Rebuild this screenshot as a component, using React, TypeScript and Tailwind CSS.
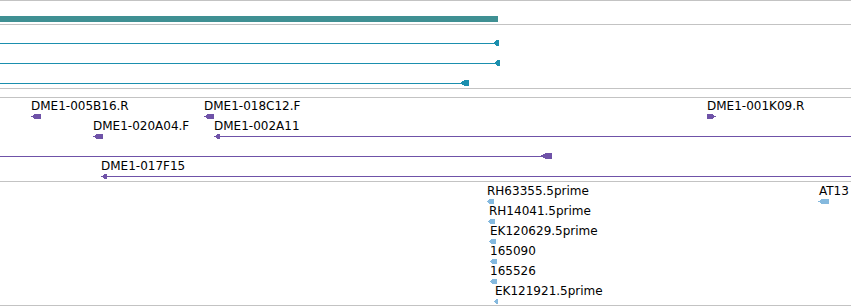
import React from "react";

type Dir = "l" | "r";

function Head({ w, h, dir, color, tip = 4 }: { w: number; h: number; dir: Dir; color: string; tip?: number }) {
  const pts =
    dir === "l"
      ? `0,${h / 2} ${tip},0 ${w},0 ${w},${h} ${tip},${h}`
      : `0,0 ${w - tip},0 ${w},${h / 2} ${w - tip},${h} 0,${h}`;
  return (
    <svg className="block shrink-0" width={w} height={h} viewBox={`0 0 ${w} ${h}`} shapeRendering="crispEdges">
      <polygon points={pts} fill={color} />
    </svg>
  );
}

function Feature({
  x,
  y,
  label,
  w,
  dir,
  color,
  tip,
  line,
  dx = 0,
}: {
  x: number;
  y: number;
  label: string;
  w: number;
  dir: Dir;
  color: string;
  tip?: number;
  line?: number;
  dx?: number;
}) {
  return (
    <div className="absolute flex flex-col items-start" style={{ left: x, top: y }}>
      <div className="whitespace-nowrap text-[12px] leading-[14px] text-black" style={{ marginLeft: dx }}>
        {label}
      </div>
      <div className="flex items-center h-[5px] mt-px">
        <Head w={w} h={5} dir={dir} color={color} tip={tip} />
        {line ? <div className="h-px -ml-px" style={{ width: line, background: color }} /> : null}
      </div>
    </div>
  );
}

/* A line feature ending with an arrow head, spanning from the left edge */
function Span({ y, w, head, color, tip, hh = 6 }: { y: number; w: number; head: number; color: string; tip: number; hh?: number }) {
  return (
    <div className="absolute left-0 flex items-center" style={{ top: y }}>
      <div className="h-px -mr-[2px]" style={{ width: w, background: color }} />
      <Head w={head} h={hh} dir="l" color={color} tip={tip} />
    </div>
  );
}

const TEAL = "#1b8fae";
const PURPLE = "#6f52a8";
const BLUE = "#85b9de";
const GRID = "border-[#c3c3c3]";

export default function App() {
  return (
    <div className="w-[851px] h-[306px] bg-white overflow-hidden font-['DejaVu_Sans',sans-serif] flex flex-col border-t border-[#c3c3c3]">
      {/* Track A: coverage bar */}
      <div className={`h-[24px] border-b ${GRID} pt-[15px]`}>
        <div className="h-[6px] w-[498px] bg-[#3f9093]" />
      </div>
      {/* Track B: transcripts */}
      <div className={`relative h-[64px] border-b ${GRID}`}>
        <Span y={15} w={495} head={6} color={TEAL} tip={4} />
        <Span y={35} w={496} head={6} color={TEAL} tip={4} />
        <Span y={55} w={462} head={9} color={TEAL} tip={5} />
      </div>
      {/* Empty track */}
      <div className={`h-[9px] border-b ${GRID}`} />
      {/* Track C: clones */}
      <div className={`relative h-[84px] border-b ${GRID}`}>
        <Feature x={31} y={1} label="DME1-005B16.R" w={10} dir="l" color={PURPLE} />
        <Feature x={204} y={1} label="DME1-018C12.F" w={10} dir="l" color={PURPLE} />
        <Feature x={707} y={1} label="DME1-001K09.R" w={9} dir="r" color={PURPLE} />
        <Feature x={93} y={21} label="DME1-020A04.F" w={10} dir="l" color={PURPLE} />
        <Feature x={214} y={21} label="DME1-002A11" w={6} dir="l" color={PURPLE} line={640} />
        <Span y={55} w={542} head={12} color={PURPLE} tip={6} />
        <Feature x={101} y={61} label="DME1-017F15" w={6} dir="l" color={PURPLE} line={750} />
      </div>
      {/* Track D: ESTs */}
      <div className={`relative h-[124px] border-b ${GRID}`}>
        <div className="absolute left-[486px] top-[2px] flex flex-col">
          <Feature x={1} y={0} label="RH63355.5prime" w={7} dir="l" color={BLUE} tip={3} />
          <Feature x={2} y={20} label="RH14041.5prime" w={7} dir="l" color={BLUE} tip={3} dx={1} />
          <Feature x={3} y={40} label="EK120629.5prime" w={7} dir="l" color={BLUE} tip={3} dx={1} />
          <Feature x={4} y={60} label="165090" w={7} dir="l" color={BLUE} tip={3} />
          <Feature x={4} y={80} label="165526" w={7} dir="l" color={BLUE} tip={3} />
          <Feature x={8} y={100} label="EK121921.5prime" w={4} dir="l" color={BLUE} tip={2} dx={1} />
        </div>
        <Feature x={818} y={2} label="AT13" w={11} dir="l" color={BLUE} tip={4} dx={1} />
      </div>
    </div>
  );
}
